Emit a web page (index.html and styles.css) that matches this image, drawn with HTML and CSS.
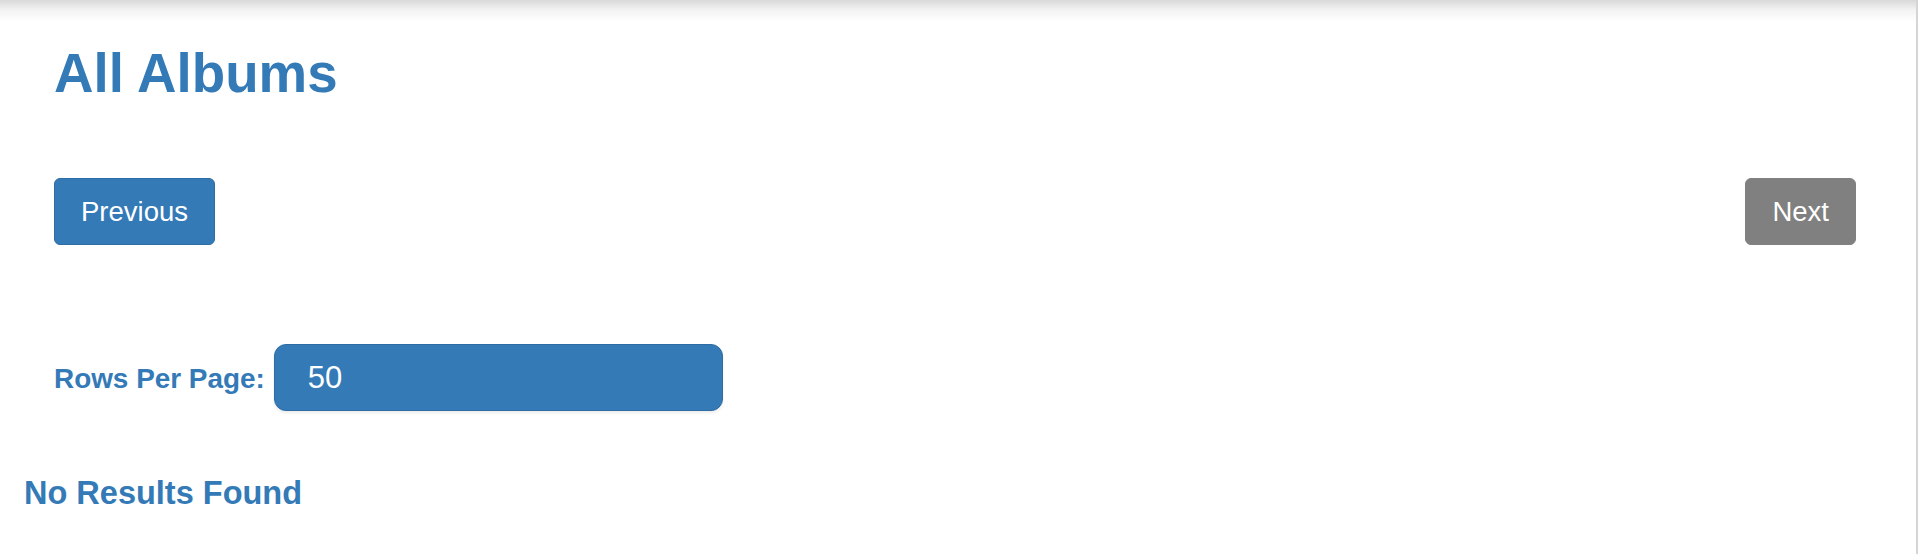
FILE: index.html
```html
<!DOCTYPE html>
<html lang="en">
<head>
<meta charset="utf-8">
<title>All Albums</title>
<link rel="stylesheet" href="styles.css">
</head>
<body>
<div class="page">
  <div class="container">
    <h1 class="title">All Albums</h1>
    <div class="pager">
      <button class="btn btn-primary" type="button">Previous</button>
      <button class="btn btn-disabled" type="button">Next</button>
    </div>
    <div class="rows">
      <label class="rows-label">Rows Per Page:</label>
      <div class="select-box">50</div>
    </div>
  </div>
  <h3 class="empty">No Results Found</h3>
</div>
</body>
</html>
```

FILE: styles.css
```css
html, body {
  margin: 0;
  padding: 0;
  background: #fff;
}

body {
  font-family: "Liberation Sans", Arial, Helvetica, sans-serif;
  height: 554px;
  overflow: hidden;
}

.page {
  box-sizing: border-box;
  height: 554px;
  padding-top: 43px;
  border-right: 2px solid #d5d5d5;
  background: linear-gradient(to bottom, #d9d9d9 0px, #f3f3f3 10px, #ffffff 22px);
}

.container {
  padding: 0 60px 0 54px;
}

.title {
  margin: 0;
  font-size: 54.7px;
  line-height: 60px;
  font-weight: bold;
  color: #337ab7;
}

.pager {
  display: flex;
  justify-content: space-between;
  margin-top: 75px;
}

.btn {
  font-family: "Liberation Sans", Arial, Helvetica, sans-serif;
  font-size: 27.5px;
  line-height: 37px;
  padding: 14px 26px;
  border-radius: 6px;
  color: #fff;
  cursor: pointer;
}

.btn-primary {
  background: #337ab7;
  border: 1px solid #2e6da4;
}

.btn-disabled {
  background: #808080;
  border: 1px solid #808080;
}

.rows {
  display: flex;
  align-items: baseline;
  gap: 9px;
  margin-top: 99px;
}

.rows-label {
  font-size: 27.9px;
  font-weight: bold;
  color: #337ab7;
}

.select-box {
  box-sizing: border-box;
  width: 449px;
  height: 67px;
  padding: 0 33px;
  font-size: 31px;
  line-height: 65px;
  color: #fff;
  background: #337ab7;
  border: 1px solid #2e6da4;
  border-radius: 12px;
  box-shadow: 0 2px 3px rgba(0, 0, 0, 0.08);
}

.empty {
  margin: 62px 0 0 24px;
  font-size: 32.5px;
  line-height: 40px;
  font-weight: bold;
  color: #337ab7;
}
```
